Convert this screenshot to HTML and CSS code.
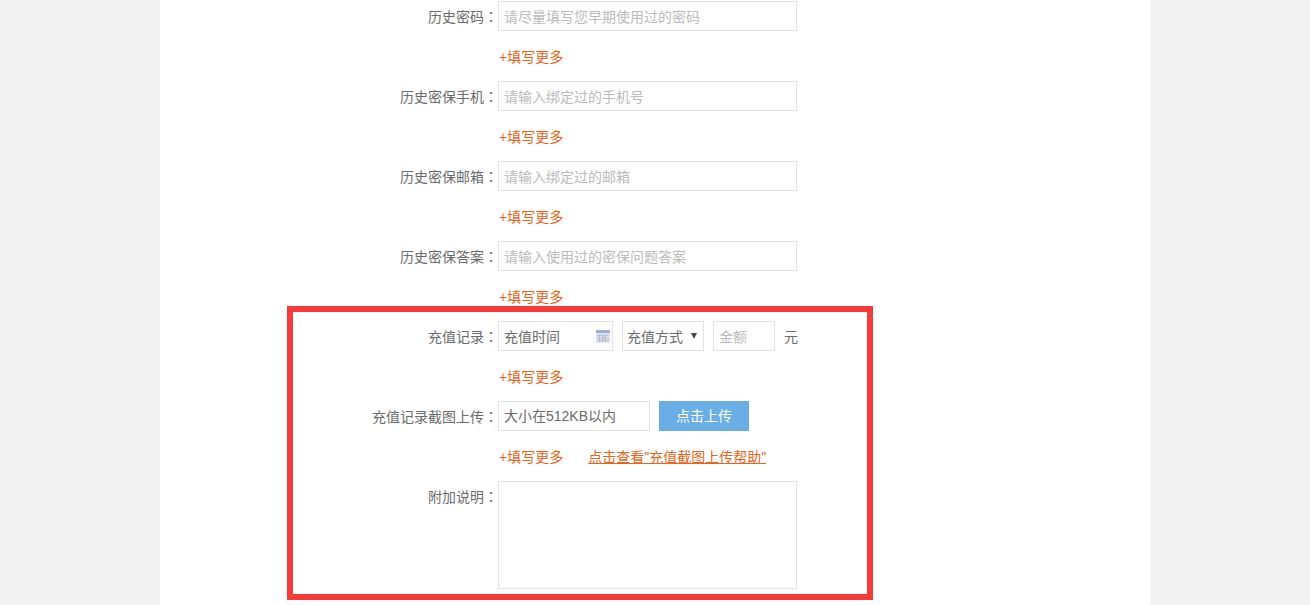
FILE: index.html
```html
<!DOCTYPE html>
<html lang="zh-CN">

<head>
    <meta charset="UTF-8">
    <title>账号申诉</title>
    <link rel="stylesheet" href="styles.css">
</head>

<body>
    <div class="page">
        <form class="appeal-form">
            <div class="row">
                <label class="row-label">历史密码<span class="colon" lang="zh-TW">：</span></label>
                <input class="text-input" type="text" placeholder="请尽量填写您早期使用过的密码">
            </div>
            <div class="row more-row"><a class="more">+填写更多</a></div>
            <div class="row">
                <label class="row-label">历史密保手机<span class="colon" lang="zh-TW">：</span></label>
                <input class="text-input" type="text" placeholder="请输入绑定过的手机号">
            </div>
            <div class="row more-row"><a class="more">+填写更多</a></div>
            <div class="row">
                <label class="row-label">历史密保邮箱<span class="colon" lang="zh-TW">：</span></label>
                <input class="text-input" type="text" placeholder="请输入绑定过的邮箱">
            </div>
            <div class="row more-row"><a class="more">+填写更多</a></div>
            <div class="row">
                <label class="row-label">历史密保答案<span class="colon" lang="zh-TW">：</span></label>
                <input class="text-input" type="text" placeholder="请输入使用过的密保问题答案">
            </div>
            <div class="row more-row"><a class="more">+填写更多</a></div>

            <div class="highlight">
                <div class="row">
                    <label class="row-label">充值记录<span class="colon" lang="zh-TW">：</span></label>
                    <div class="date-input">
                        <span>充值时间</span>
                        <svg class="cal-icon" width="14" height="13" viewBox="0 0 14 13">
                            <rect x="0" y="0" width="14" height="13" fill="#dfe4ef"/>
                            <rect x="0" y="0" width="14" height="3" fill="#9fafcf"/>
                            <path d="M1 5.5h12M1 8h12M1 10.5h12M3.5 4v8M6.5 4v8M9.5 4v8" stroke="#b7c2d8" stroke-width="1" fill="none"/>
                            <path d="M7 7h2M7 9.5h2" stroke="#e6b9b4" stroke-width="1" fill="none"/>
                        </svg>
                    </div>
                    <div class="select-box">充值方式<span class="arrow"></span></div>
                    <input class="amount-input" type="text" placeholder="金额">
                    <span class="unit">元</span>
                </div>
                <div class="row more-row"><a class="more">+填写更多</a></div>
                <div class="row">
                    <label class="row-label">充值记录截图上传<span class="colon" lang="zh-TW">：</span></label>
                    <div class="upload-input">大小在512KB以内</div>
                    <a class="upload-btn">点击上传</a>
                </div>
                <div class="row more-row">
                    <a class="more">+填写更多</a>
                    <a class="help-link">点击查看"充值截图上传帮助"</a>
                </div>
                <div class="row note-row">
                    <label class="row-label">附加说明<span class="colon" lang="zh-TW">：</span></label>
                    <textarea class="note-input"></textarea>
                </div>
            </div>
        </form>
    </div>
</body>

</html>
```

FILE: styles.css
```css
html,
body {
    margin: 0;
    height: 605px;
    overflow: hidden;
}

body {
    background-color: #f2f2f2;
    font-family: "Liberation Sans", "Noto Sans CJK SC", sans-serif;
    font-size: 14px;
    color: #6b6b6b;
}

.page {
    width: 990px;
    height: 605px;
    margin-left: 160px;
    background-color: #fff;
    overflow: hidden;
}

.appeal-form {
    width: 586px;
    margin-left: 127px;
}

.row {
    display: flex;
    align-items: center;
    height: 32px;
    margin-bottom: 8px;
    padding-left: 8px;
}

.row-label {
    width: 203px;
    text-align: right;
    flex-shrink: 0;
}

/* colon sits centred in its cell, the TC face draws it that way */
.colon {
    font-family: "Noto Sans CJK TC", sans-serif;
}

.more-row {
    padding-left: 212px;
    height: 32px;
}

.more {
    color: #e8641b;
}

.text-input,
.amount-input,
.note-input {
    box-sizing: border-box;
    border: 1px solid #e3e3e3;
    font-family: inherit;
    font-size: 14px;
    color: #6b6b6b;
    outline: none;
    padding: 2px 5px 0;
    margin: 0;
    background: #fff;
}

.text-input {
    width: 299px;
    height: 30px;
}

input::placeholder {
    color: #bbb;
    opacity: 1;
}

.highlight {
    box-sizing: border-box;
    width: 586px;
    height: 294px;
    margin-top: -14px;
    padding-top: 8px;
    border: 6px solid #f83a3a;
}

.highlight .row {
    padding-left: 2px;
}

.highlight .more-row {
    padding-left: 206px;
}

.date-input {
    box-sizing: border-box;
    display: flex;
    align-items: center;
    justify-content: space-between;
    width: 115px;
    height: 30px;
    padding: 0 2px 0 5px;
    border: 1px solid #e3e3e3;
}

.select-box {
    box-sizing: border-box;
    display: flex;
    align-items: center;
    width: 82px;
    height: 30px;
    margin-left: 9px;
    padding-left: 4px;
    border: 1px solid #e3e3e3;
}

.arrow {
    width: 0;
    height: 0;
    margin-left: 8px;
    border-left: 3px solid transparent;
    border-right: 3px solid transparent;
    border-top: 6px solid #444;
}

.amount-input {
    width: 62px;
    height: 30px;
    margin-left: 9px;
}

.unit {
    margin-left: 9px;
}

.upload-input {
    box-sizing: border-box;
    width: 152px;
    height: 30px;
    line-height: 28px;
    padding-left: 5px;
    border: 1px solid #e3e3e3;
}

.upload-btn {
    width: 90px;
    height: 30px;
    margin-left: 9px;
    line-height: 30px;
    text-align: center;
    background-color: #6aaee6;
    color: #fff;
}

.help-link {
    margin-left: 25px;
    color: #e8641b;
    text-decoration: underline;
}

.note-row {
    align-items: flex-start;
    height: 108px;
    margin-bottom: 0;
}

.note-row .row-label {
    line-height: 32px;
}

.note-input {
    width: 299px;
    height: 108px;
    margin-top: 1px;
    resize: none;
}
```
